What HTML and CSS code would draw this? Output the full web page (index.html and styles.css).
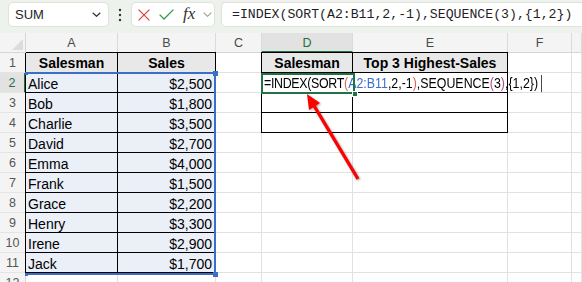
FILE: index.html
```html
<!DOCTYPE html>
<html>
<head>
<meta charset="utf-8">
<link rel="stylesheet" href="styles.css">
</head>
<body>
<div class="toolbar">
  <div class="namebox">
    <span>SUM</span>
    <svg class="chev" width="9" height="5" viewBox="0 0 9 5"><path d="M0.7 0.7 L4.5 4.3 L8.3 0.7" fill="none" stroke="#333" stroke-width="1.2"/></svg>
  </div>
  <div class="dots">
    <svg width="4" height="14" viewBox="0 0 4 14"><circle cx="2" cy="2" r="1.2" fill="#333"/><circle cx="2" cy="7" r="1.2" fill="#333"/><circle cx="2" cy="12" r="1.2" fill="#333"/></svg>
  </div>
  <div class="fnbox">
    <svg class="ix" width="12" height="12" viewBox="0 0 12 12"><path d="M0.6 0.6 L11.4 11.4 M11.4 0.6 L0.6 11.4" stroke="#e0453f" stroke-width="1.3" fill="none"/></svg>
    <svg class="ic" width="15" height="11" viewBox="0 0 15 11"><path d="M0.6 5.6 L5 10 L14.4 0.6" stroke="#2f9a47" stroke-width="1.3" fill="none"/></svg>
    <span class="fx">fx</span>
    <svg class="chev2" width="9" height="5" viewBox="0 0 9 5"><path d="M0.7 0.7 L4.5 4.3 L8.3 0.7" fill="none" stroke="#9a9a9a" stroke-width="1.1"/></svg>
  </div>
  <div class="formula">=INDEX(SORT(A2:B11,2,-1),SEQUENCE(3),{1,2})</div>
</div>

<div class="sheet">
  <div class="cell corner"><span class="tri"></span></div>
  <div class="cell ch">A</div>
  <div class="cell ch">B</div>
  <div class="cell ch">C</div>
  <div class="cell ch sel">D</div>
  <div class="cell ch">E</div>
  <div class="cell ch">F</div>
  <div class="cell ch"></div>

  <div class="cell rh">1</div>
  <div class="cell hd bx bl bt">Salesman</div>
  <div class="cell hd bx bt">Sales</div>
  <div class="cell"></div>
  <div class="cell hd bx bl bt">Salesman</div>
  <div class="cell hd bx bt">Top 3 Highest-Sales</div>
  <div class="cell"></div>
  <div class="cell"></div>

  <div class="cell rh sel">2</div>
  <div class="cell dt bx bl">Alice</div>
  <div class="cell dt bx r">$2,500</div>
  <div class="cell"></div>
  <div class="cell bx bl fcell"><span class="ftext"><span class="pre">=INDEX(SORT</span><span class="p1">(</span><span class="ref">A2:B11</span>,2,-1<span class="p1">)</span>,SEQUENCE<span class="p2">(</span>3<span class="p2">)</span>,{1,2})<span class="caret"></span></span></div>
  <div class="cell bx"></div>
  <div class="cell"></div>
  <div class="cell"></div>

  <div class="cell rh">3</div>
  <div class="cell dt bx bl">Bob</div>
  <div class="cell dt bx r">$1,800</div>
  <div class="cell"></div>
  <div class="cell bx bl"></div>
  <div class="cell bx"></div>
  <div class="cell"></div>
  <div class="cell"></div>

  <div class="cell rh">4</div>
  <div class="cell dt bx bl">Charlie</div>
  <div class="cell dt bx r">$3,500</div>
  <div class="cell"></div>
  <div class="cell bx bl"></div>
  <div class="cell bx"></div>
  <div class="cell"></div>
  <div class="cell"></div>

  <div class="cell rh">5</div>
  <div class="cell dt bx bl">David</div>
  <div class="cell dt bx r">$2,700</div>
  <div class="cell"></div><div class="cell"></div><div class="cell"></div><div class="cell"></div><div class="cell"></div>

  <div class="cell rh">6</div>
  <div class="cell dt bx bl">Emma</div>
  <div class="cell dt bx r">$4,000</div>
  <div class="cell"></div><div class="cell"></div><div class="cell"></div><div class="cell"></div><div class="cell"></div>

  <div class="cell rh">7</div>
  <div class="cell dt bx bl">Frank</div>
  <div class="cell dt bx r">$1,500</div>
  <div class="cell"></div><div class="cell"></div><div class="cell"></div><div class="cell"></div><div class="cell"></div>

  <div class="cell rh">8</div>
  <div class="cell dt bx bl">Grace</div>
  <div class="cell dt bx r">$2,200</div>
  <div class="cell"></div><div class="cell"></div><div class="cell"></div><div class="cell"></div><div class="cell"></div>

  <div class="cell rh">9</div>
  <div class="cell dt bx bl">Henry</div>
  <div class="cell dt bx r">$3,300</div>
  <div class="cell"></div><div class="cell"></div><div class="cell"></div><div class="cell"></div><div class="cell"></div>

  <div class="cell rh">10</div>
  <div class="cell dt bx bl">Irene</div>
  <div class="cell dt bx r">$2,900</div>
  <div class="cell"></div><div class="cell"></div><div class="cell"></div><div class="cell"></div><div class="cell"></div>

  <div class="cell rh">11</div>
  <div class="cell dt bx bl">Jack</div>
  <div class="cell dt bx r">$1,700</div>
  <div class="cell"></div><div class="cell"></div><div class="cell"></div><div class="cell"></div><div class="cell"></div>

  <div class="cell rh">12</div>
  <div class="cell"></div><div class="cell"></div><div class="cell"></div><div class="cell"></div><div class="cell"></div><div class="cell"></div><div class="cell"></div>

  <div class="range"></div>
  <div class="h h-tl"></div>
  <div class="h h-tr"></div>
  <div class="h h-bl"></div>
  <div class="h h-br"></div>
  <div class="active"></div>
  <div class="ah"></div>
</div>

<svg class="arrow" width="582" height="282" viewBox="0 0 582 282">
  <g class="shadow">
    <line x1="358" y1="179" x2="313" y2="104" stroke="#f00" stroke-width="3.4" stroke-linecap="butt"/>
    <polygon points="307,94 320,103 309,110" fill="#f00"/>
  </g>
</svg>
</body>
</html>
```

FILE: styles.css
```css
* { box-sizing: border-box; }
html, body { margin: 0; padding: 0; }
body {
  width: 582px;
  height: 282px;
  overflow: hidden;
  background: #fff;
  font-family: "Liberation Sans", Arial, sans-serif;
  position: relative;
}

.toolbar {
  height: 33px;
  background: #eef2ec;
  display: flex;
  align-items: flex-start;
  padding: 2px 0 0 8px;
}
.namebox {
  width: 101px;
  height: 25px;
  background: #fff;
  border: 1px solid #dfe3dc;
  border-radius: 5px;
  display: flex;
  align-items: center;
  justify-content: space-between;
  padding: 0 7px 0 6px;
  font-size: 13px;
  color: #242424;
}
.dots {
  width: 22px;
  height: 25px;
  display: flex;
  align-items: center;
  justify-content: center;
}
.fnbox {
  width: 84px;
  height: 25px;
  background: #fff;
  border: 1px solid #dfe3dc;
  border-radius: 5px;
  display: flex;
  align-items: center;
}
.ix { margin-left: 6px; }
.ic { margin-left: 9px; }
.fx {
  margin-left: 9px;
  width: 16px;
  font-family: "Liberation Serif", serif;
  font-style: italic;
  font-size: 17px;
  color: #333;
  line-height: 1;
  margin-top: -2px;
}
.chev2 { margin-left: 4px; }
.formula {
  flex: 1;
  margin-left: 6px;
  height: 25px;
  background: #fff;
  border: 1px solid #dfe3dc;
  border-right: none;
  border-radius: 5px 0 0 5px;
  padding-left: 10px;
  display: flex;
  align-items: center;
  font-family: "Liberation Mono", monospace;
  font-size: 13.2px;
  color: #1f1f1f;
  white-space: nowrap;
}

.sheet {
  display: grid;
  grid-template-columns: 26px 92px 98px 46px 91px 155px 64px 10px;
  grid-auto-rows: 20px;
  position: relative;
}
.cell {
  border-right: 1px solid #e1e1e1;
  border-bottom: 1px solid #e1e1e1;
  display: flex;
  align-items: flex-end;
  font-size: 14px;
  color: #000;
  white-space: nowrap;
  min-width: 0;
}
.corner {
  background: #f4f4f4;
  border-right-color: #d6d6d6;
  border-bottom-color: #d6d6d6;
  position: relative;
}
.tri {
  position: absolute;
  right: 2px;
  bottom: 2px;
  width: 0;
  height: 0;
  border-left: 11px solid transparent;
  border-bottom: 11px solid #dcdcdc;
}
.ch {
  background: #f4f4f4;
  border-right-color: #dadada;
  border-bottom-color: #d6d6d6;
  justify-content: center;
  align-items: center;
  font-size: 12.5px;
  color: #4a4a4a;
  padding-top: 1px;
}
.ch.sel {
  background: #e2e2e2;
  color: #1e7145;
  border-bottom: 2px solid #217346;
}
.rh {
  background: #f4f4f4;
  border-right-color: #d6d6d6;
  border-bottom-color: #e4e4e4;
  justify-content: center;
  align-items: center;
  font-size: 12.5px;
  color: #555;
  padding-top: 1px;
}
.rh.sel {
  background: #e2e2e2;
  color: #1e7145;
  border-right: 2px solid #217346;
}
.hd {
  background: #e8e8e8;
  font-weight: bold;
  justify-content: center;
  padding-bottom: 1px;
}
.dt {
  background: #ebeff8;
  padding-left: 2px;
  padding-bottom: 0;
}
.r {
  justify-content: flex-end;
  padding-left: 0;
  padding-right: 3px;
}
.bx {
  border-right-color: #000;
  border-bottom-color: #000;
}
.bl { box-shadow: -1px 0 0 #000; }
.bt { box-shadow: 0 -1px 0 #000; }
.bl.bt { box-shadow: -1px 0 0 #000, 0 -1px 0 #000, -1px -1px 0 #000; }

.fcell {
  overflow: visible;
  padding-left: 2px;
  border-right-color: transparent;
}
.ftext {
  display: inline-block;
  transform: scaleX(0.885);
  transform-origin: left bottom;
  font-size: 14px;
}
.pre { letter-spacing: -0.35px; }
.p1 { color: #e0645a; }
.p2 { color: #b5478f; }
.ref { color: #3c6fd1; }
.caret {
  display: inline-block;
  width: 1px;
  height: 17px;
  background: #333;
  margin-left: 3px;
  vertical-align: -4px;
}

.range {
  position: absolute;
  left: 25px;
  top: 39px;
  width: 191px;
  height: 203px;
  border: 2px solid #3b6fc4;
  border-left: none;
}
.h {
  position: absolute;
  background: #3b6fc4;
}
.h-tl { left: 25px; top: 39px; width: 3px; height: 3px; }
.h-bl { left: 25px; top: 240px; width: 3px; height: 3px; }
.h-tr { left: 213px; top: 38px; width: 5px; height: 5px; }
.h-br { left: 213px; top: 239px; width: 5px; height: 5px; }
.active {
  position: absolute;
  left: 261px;
  top: 40px;
  width: 94px;
  height: 21px;
  border: 2px solid #217346;
}
.ah {
  position: absolute;
  left: 352px;
  top: 58px;
  width: 6px;
  height: 6px;
  background: #217346;
  border: 1px solid #fff;
}

.arrow {
  position: absolute;
  left: 0;
  top: 0;
  pointer-events: none;
}
.shadow { filter: drop-shadow(1px 1px 1px rgba(0, 0, 0, 0.35)); }
```
